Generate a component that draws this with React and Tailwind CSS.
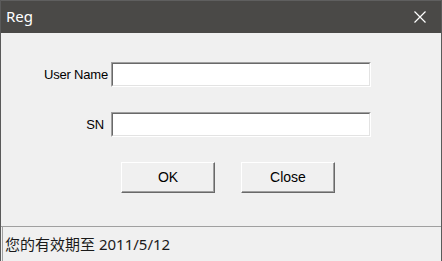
import React from 'react';

function Field({ label, pad = 'pr-[3px]', className = '' }) {
  return (
    <div className={`flex items-center ${className}`}>
      <span className={`w-[110px] ${pad} text-right text-[13px] leading-none text-black tracking-[-0.2px]`}>{label}</span>
      <div className="border-t border-l border-[#a0a0a0] border-r border-b border-r-white border-b-white">
        <input
          className="block w-[258px] h-[23px] bg-white border-t border-l border-[#696969] border-r border-b border-r-[#e3e3e3] border-b-[#e3e3e3] outline-none px-1 text-[13px]"
          type="text"
        />
      </div>
    </div>
  );
}

function Btn({ children }) {
  return (
    <button className="w-[94px] h-[31px] bg-[#f0f0f0] border-t border-l border-white border-r border-b border-r-[#696969] border-b-[#696969] shadow-[inset_-1px_-1px_0_#a0a0a0] text-[14px] text-black">
      {children}
    </button>
  );
}

export default function App() {
  return (
    <div
      className="w-[442px] h-[261px] flex flex-col bg-[#f0f0f0] border-x border-[#5a5a5a] overflow-hidden"
      style={{ fontFamily: '"Liberation Sans", "Noto Sans CJK SC", sans-serif' }}
    >
      <div className="h-[33px] shrink-0 flex items-center justify-between bg-[#4a4947] border-t border-[#5f5f5f] pl-[5px] pr-[15px]">
        <span className="text-white text-[15px] leading-none pb-[1px]" style={{ fontFamily: '"Noto Sans", sans-serif' }}>Reg</span>
        <svg width="12" height="12" viewBox="0 0 12 12">
          <path d="M0.5 0.5 L11.5 11.5 M11.5 0.5 L0.5 11.5" stroke="#ffffff" strokeWidth="1.2" fill="none" />
        </svg>
      </div>
      <div className="flex-1 flex flex-col pt-[29px]">
        <Field label="User Name" />
        <Field label="SN" pad="pr-[7px]" className="mt-[25px]" />
        <div className="flex gap-[26px] mt-[25px] pl-[120px]">
          <Btn>OK</Btn>
          <Btn>Close</Btn>
        </div>
      </div>
      <div className="h-[35px] shrink-0 border-t border-[#a0a0a0] flex items-center">
        <div
          className="h-full flex items-center border-l border-[#a0a0a0] ml-[1px] pl-[2px] text-[15px] text-[#1a1a1a]"
          style={{ fontFamily: '"Noto Sans", "Noto Sans CJK SC", sans-serif' }}
        >
          您的有效期至 2011/5/12
        </div>
      </div>
    </div>
  );
}
